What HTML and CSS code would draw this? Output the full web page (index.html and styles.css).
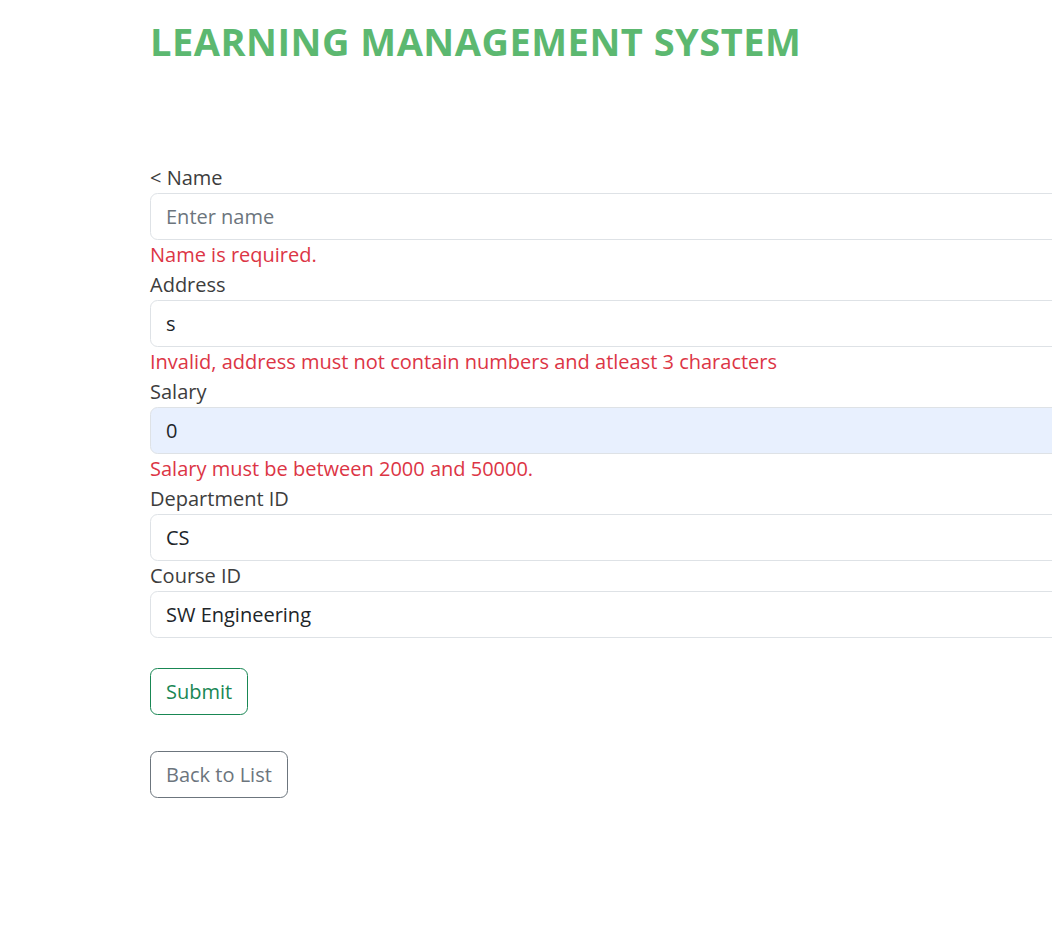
FILE: index.html
```html
<!DOCTYPE html>
<html lang="en">
<head>
<meta charset="utf-8">
<title>Learning Management System</title>
<link rel="stylesheet" href="styles.css">
</head>
<body>
<div class="page">
  <header class="site-header">
    <h1 class="brand">LEARNING MANAGEMENT SYSTEM</h1>
  </header>
  <main class="content">
    <form class="edit-form">
      <label class="field-label">&lt; Name</label>
      <input class="field-input" type="text" placeholder="Enter name">
      <div class="field-error">Name is required.</div>

      <label class="field-label">Address</label>
      <input class="field-input" type="text" value="s">
      <div class="field-error">Invalid, address must not contain numbers and atleast 3 characters</div>

      <label class="field-label">Salary</label>
      <input class="field-input autofilled" type="text" value="0">
      <div class="field-error">Salary must be between 2000 and 50000.</div>

      <label class="field-label">Department ID</label>
      <input class="field-input" type="text" value="CS">

      <label class="field-label">Course ID</label>
      <input class="field-input" type="text" value="SW Engineering">

      <div class="actions">
        <button type="button" class="btn btn-success-outline">Submit</button>
      </div>
    </form>
    <div class="back">
      <button type="button" class="btn btn-secondary-outline">Back to List</button>
    </div>
  </main>
</div>
</body>
</html>
```
FILE: styles.css
```css
html, body {
  margin: 0;
  padding: 0;
  overflow: hidden;
  background: #fff;
}
body {
  font-family: "Open Sans", "Noto Sans", sans-serif;
  font-size: 20px;
  line-height: 1.5;
  color: #212529;
}
.page {
  padding-left: 150px;
  overflow: hidden;
}
.site-header {
  padding-top: 19px;
  height: 163px;
  box-sizing: border-box;
}
.brand {
  margin: 0;
  font-family: "Open Sans", sans-serif;
  font-weight: 700;
  font-size: 38px;
  line-height: 1.2;
  color: #5cb870;
  letter-spacing: 0.5px;
}
.content {
  width: calc(100% + 40px);
}
.edit-form {
  display: flex;
  flex-direction: column;
  align-items: stretch;
}
.field-label {
  color: #3d3d3d;
  height: 30px;
}
.field-input {
  font-family: inherit;
  font-size: 20px;
  line-height: 1.5;
  color: #212529;
  padding: 7.5px 15px;
  border: 1px solid #dee2e6;
  border-radius: 7.5px;
  background: #fff;
  height: 47px;
  box-sizing: border-box;
  outline: none;
}
.field-input::placeholder {
  color: #6c757d;
}
.field-input.autofilled {
  background: #e8f0fe;
}
.field-error {
  color: #dc3545;
  height: 30px;
}
.actions {
  margin-top: 30px;
}
.back {
  margin-top: 36px;
}
.btn {
  font-family: inherit;
  font-size: 20px;
  line-height: 1.5;
  padding: 7.5px 15px;
  border-radius: 7.5px;
  background: transparent;
  height: 47px;
  box-sizing: border-box;
  cursor: pointer;
}
.btn-success-outline {
  color: #198754;
  border: 1px solid #198754;
}
.btn-secondary-outline {
  color: #6c757d;
  border: 1px solid #6c757d;
}
```
